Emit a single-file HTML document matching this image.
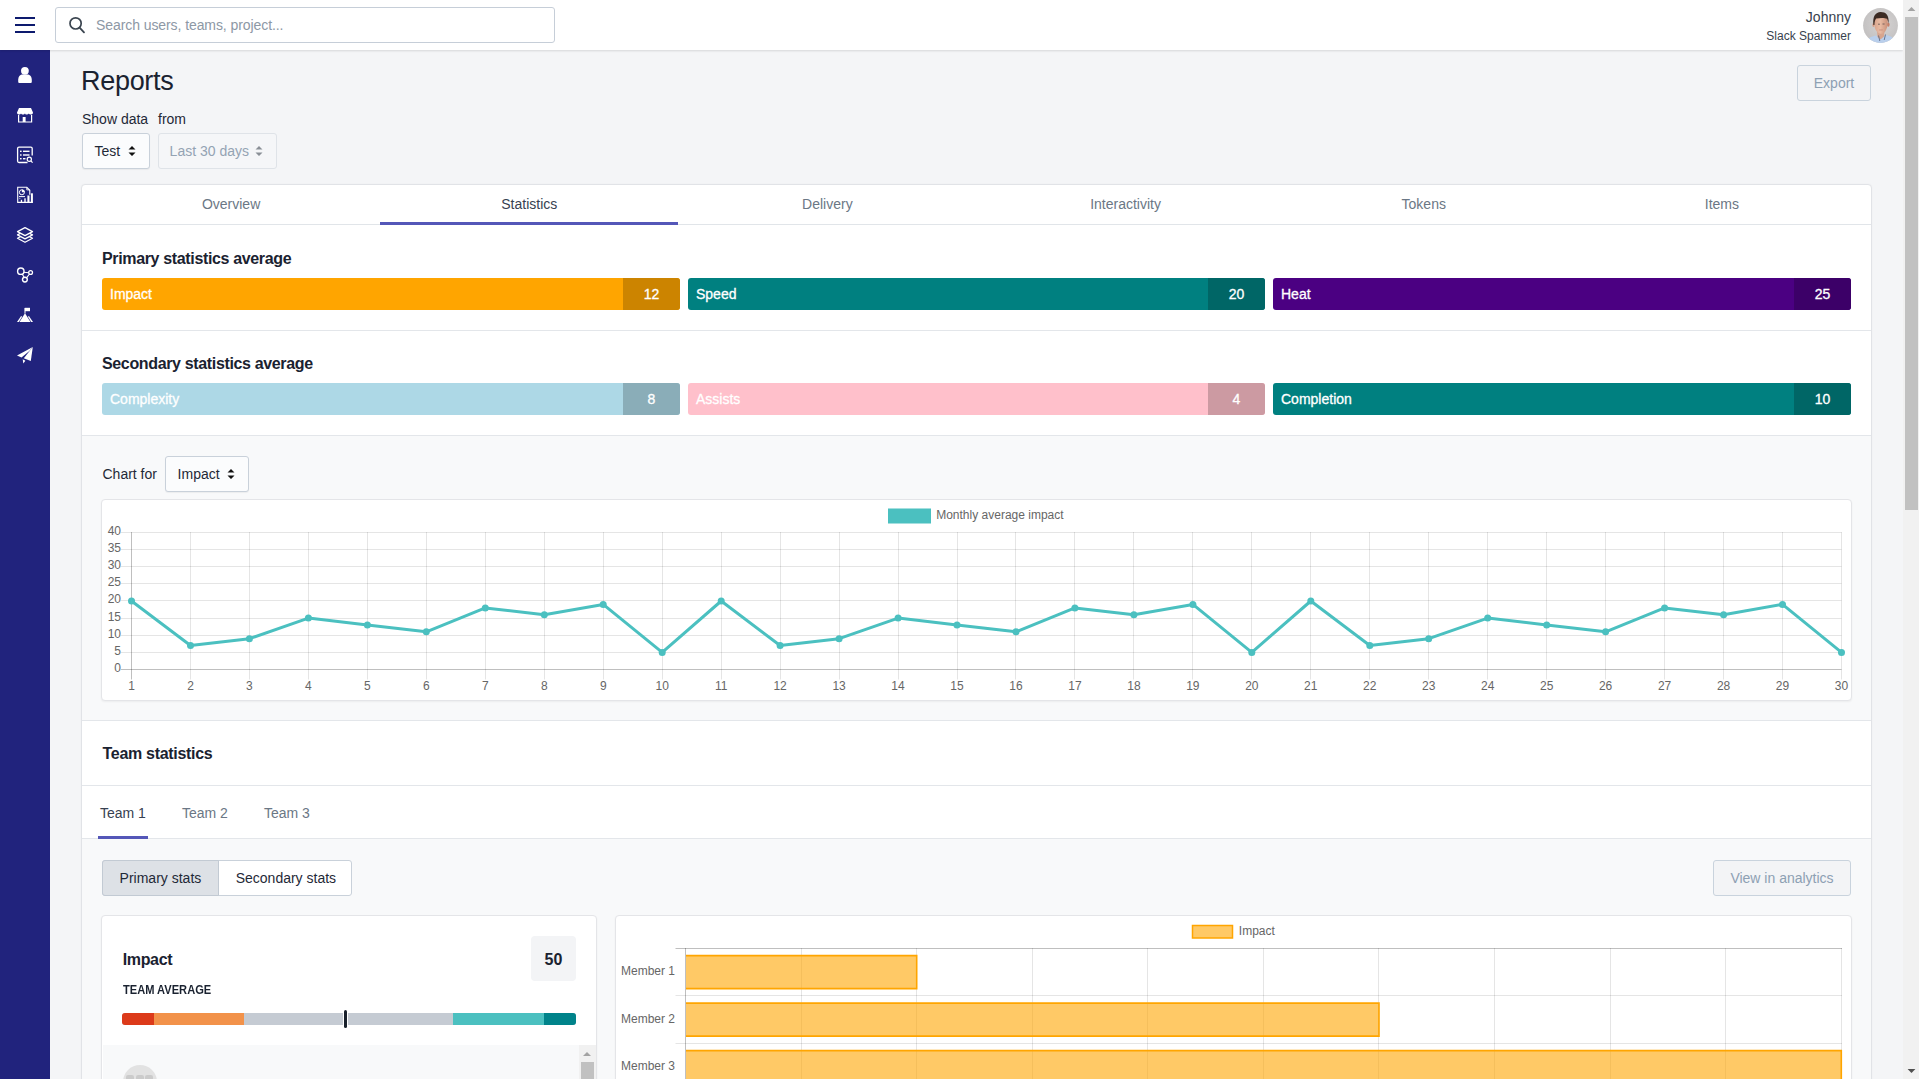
<!DOCTYPE html>
<html><head><meta charset="utf-8"><title>Reports</title>
<style>
html,body{margin:0;padding:0;}
body{width:1919px;height:1079px;overflow:hidden;position:relative;background:#f4f5f7;font-family:"Liberation Sans", sans-serif;}
.t{position:absolute;white-space:nowrap;line-height:1;}
.b{position:absolute;box-sizing:border-box;}
svg{position:absolute;overflow:visible;}
</style></head><body>
<div class="t" style="left:81px;top:68.48px;font-size:27px;color:#1a2230;font-weight:400;letter-spacing:-0.3px;">Reports</div>
<div class="t" style="left:82px;top:112.07px;font-size:14px;color:#1f2937;font-weight:400;">Show data</div>
<div class="t" style="left:158px;top:112.07px;font-size:14px;color:#1f2937;font-weight:400;">from</div>
<div class="b" style="left:82px;top:133px;width:68px;height:36px;background:#fbfcfd;border:1px solid #c9d1da;border-radius:3px;box-shadow:0 1px 1px rgba(0,0,0,0.05);"></div>
<div class="t" style="left:94.5px;top:143.67px;font-size:14px;color:#1f2937;font-weight:400;">Test</div>
<div class="b" style="left:158px;top:133px;width:119px;height:36px;background:#f5f6f8;border:1px solid #dfe3e8;border-radius:3px;"></div>
<div class="t" style="left:169.6px;top:143.67px;font-size:14px;color:#94a3b3;font-weight:400;">Last 30 days</div>
<svg style="left:128px;top:145px" width="8" height="12" viewBox="0 0 8 12"><path d="M0.5 4.5 L4 1 L7.5 4.5 Z M0.5 7.5 L4 11 L7.5 7.5 Z" fill="#111"/></svg>
<svg style="left:255px;top:145px" width="8" height="12" viewBox="0 0 8 12"><path d="M0.5 4.5 L4 1 L7.5 4.5 Z M0.5 7.5 L4 11 L7.5 7.5 Z" fill="#8a8f96"/></svg>
<div class="b" style="left:1797px;top:65px;width:74px;height:36px;background:#f3f4f6;border:1px solid #c9d3dd;border-radius:3px;"></div>
<div class="t" style="left:1634px;width:400px;text-align:center;top:75.97px;font-size:14px;color:#8da0b3;font-weight:400;">Export</div>
<div class="b" style="left:81px;top:184px;width:1791px;height:916px;background:#fff;border:1px solid #e1e3e7;border-radius:4px;box-shadow:0 0 2px rgba(0,0,0,0.04);"></div>
<div class="t" style="left:31.083333333333343px;width:400px;text-align:center;top:197.37px;font-size:14px;color:#6b7785;font-weight:400;">Overview</div>
<div class="t" style="left:329.25px;width:400px;text-align:center;top:197.37px;font-size:14px;color:#374151;font-weight:400;">Statistics</div>
<div class="t" style="left:627.4166666666667px;width:400px;text-align:center;top:197.37px;font-size:14px;color:#6b7785;font-weight:400;">Delivery</div>
<div class="t" style="left:925.5833333333335px;width:400px;text-align:center;top:197.37px;font-size:14px;color:#6b7785;font-weight:400;">Interactivity</div>
<div class="t" style="left:1223.75px;width:400px;text-align:center;top:197.37px;font-size:14px;color:#6b7785;font-weight:400;">Tokens</div>
<div class="t" style="left:1521.9166666666667px;width:400px;text-align:center;top:197.37px;font-size:14px;color:#6b7785;font-weight:400;">Items</div>
<div class="b" style="left:82px;top:224px;width:1789px;height:1px;background:#e1e5e9;"></div>
<div class="b" style="left:380px;top:222px;width:298px;height:3px;background:#5457b8;"></div>
<div class="t" style="left:102px;top:250.91px;font-size:16px;color:#1a2230;font-weight:700;letter-spacing:-0.35px;">Primary statistics average</div>
<div class="b" style="left:82px;top:330px;width:1789px;height:1px;background:#e3e6ea;"></div>
<div class="t" style="left:102px;top:356.21px;font-size:16px;color:#1a2230;font-weight:700;letter-spacing:-0.35px;">Secondary statistics average</div>
<div class="b" style="left:82px;top:435px;width:1789px;height:1px;background:#e3e6ea;"></div>
<div class="b" style="left:102px;top:278px;width:578px;height:32px;background:#ffa500;border-radius:3px;overflow:hidden;"></div>
<div class="b" style="left:623px;top:278px;width:57px;height:32px;background:#cc8400;border-radius:0 3px 3px 0;"></div>
<div class="t" style="left:110px;top:287.37px;font-size:14px;color:#fff;font-weight:400;-webkit-text-stroke:0.3px #fff;">Impact</div>
<div class="t" style="left:451.5px;width:400px;text-align:center;top:287.37px;font-size:14px;color:#fff;font-weight:400;-webkit-text-stroke:0.3px #fff;">12</div>
<div class="b" style="left:688px;top:278px;width:577px;height:32px;background:#008080;border-radius:3px;overflow:hidden;"></div>
<div class="b" style="left:1208px;top:278px;width:57px;height:32px;background:#006666;border-radius:0 3px 3px 0;"></div>
<div class="t" style="left:696px;top:287.37px;font-size:14px;color:#fff;font-weight:400;-webkit-text-stroke:0.3px #fff;">Speed</div>
<div class="t" style="left:1036.5px;width:400px;text-align:center;top:287.37px;font-size:14px;color:#fff;font-weight:400;-webkit-text-stroke:0.3px #fff;">20</div>
<div class="b" style="left:1273px;top:278px;width:578px;height:32px;background:#4b0082;border-radius:3px;overflow:hidden;"></div>
<div class="b" style="left:1794px;top:278px;width:57px;height:32px;background:#3c0068;border-radius:0 3px 3px 0;"></div>
<div class="t" style="left:1281px;top:287.37px;font-size:14px;color:#fff;font-weight:400;-webkit-text-stroke:0.3px #fff;">Heat</div>
<div class="t" style="left:1622.5px;width:400px;text-align:center;top:287.37px;font-size:14px;color:#fff;font-weight:400;-webkit-text-stroke:0.3px #fff;">25</div>
<div class="b" style="left:102px;top:383px;width:578px;height:32px;background:#add8e6;border-radius:3px;overflow:hidden;"></div>
<div class="b" style="left:623px;top:383px;width:57px;height:32px;background:#8aadb8;border-radius:0 3px 3px 0;"></div>
<div class="t" style="left:110px;top:392.37px;font-size:14px;color:#fff;font-weight:400;-webkit-text-stroke:0.3px #fff;">Complexity</div>
<div class="t" style="left:451.5px;width:400px;text-align:center;top:392.37px;font-size:14px;color:#fff;font-weight:400;-webkit-text-stroke:0.3px #fff;">8</div>
<div class="b" style="left:688px;top:383px;width:577px;height:32px;background:#ffc0cb;border-radius:3px;overflow:hidden;"></div>
<div class="b" style="left:1208px;top:383px;width:57px;height:32px;background:#cc9aa2;border-radius:0 3px 3px 0;"></div>
<div class="t" style="left:696px;top:392.37px;font-size:14px;color:#fff;font-weight:400;-webkit-text-stroke:0.3px #fff;">Assists</div>
<div class="t" style="left:1036.5px;width:400px;text-align:center;top:392.37px;font-size:14px;color:#fff;font-weight:400;-webkit-text-stroke:0.3px #fff;">4</div>
<div class="b" style="left:1273px;top:383px;width:578px;height:32px;background:#008080;border-radius:3px;overflow:hidden;"></div>
<div class="b" style="left:1794px;top:383px;width:57px;height:32px;background:#006666;border-radius:0 3px 3px 0;"></div>
<div class="t" style="left:1281px;top:392.37px;font-size:14px;color:#fff;font-weight:400;-webkit-text-stroke:0.3px #fff;">Completion</div>
<div class="t" style="left:1622.5px;width:400px;text-align:center;top:392.37px;font-size:14px;color:#fff;font-weight:400;-webkit-text-stroke:0.3px #fff;">10</div>
<div class="b" style="left:82px;top:436px;width:1789px;height:284px;background:#f8f9fa;"></div>
<div class="b" style="left:82px;top:720px;width:1789px;height:1px;background:#e3e6ea;"></div>
<div class="t" style="left:102.5px;top:467.37px;font-size:14px;color:#1f2937;font-weight:400;">Chart for</div>
<div class="b" style="left:165px;top:456px;width:84px;height:36px;background:#fbfcfd;border:1px solid #c9d1da;border-radius:3px;box-shadow:0 1px 1px rgba(0,0,0,0.05);"></div>
<div class="t" style="left:177.6px;top:467.37px;font-size:14px;color:#1f2937;font-weight:400;">Impact</div>
<svg style="left:227px;top:468px" width="8" height="12" viewBox="0 0 8 12"><path d="M0.5 4.5 L4 1 L7.5 4.5 Z M0.5 7.5 L4 11 L7.5 7.5 Z" fill="#111"/></svg>
<div class="b" style="left:101px;top:499px;width:1751px;height:202px;background:#fff;border:1px solid #e4e5e8;border-radius:4px;box-shadow:0 1px 2px rgba(0,0,0,0.05);"></div>
<svg style="left:0;top:0" width="1919" height="1079" viewBox="0 0 1919 1079"><line x1="121" y1="669.5" x2="1841.5" y2="669.5" stroke="rgba(0,0,0,0.25)" stroke-width="1"/><line x1="121" y1="652.5" x2="1841.5" y2="652.5" stroke="rgba(0,0,0,0.1)" stroke-width="1"/><line x1="121" y1="635.5" x2="1841.5" y2="635.5" stroke="rgba(0,0,0,0.1)" stroke-width="1"/><line x1="121" y1="618.5" x2="1841.5" y2="618.5" stroke="rgba(0,0,0,0.1)" stroke-width="1"/><line x1="121" y1="600.5" x2="1841.5" y2="600.5" stroke="rgba(0,0,0,0.1)" stroke-width="1"/><line x1="121" y1="583.5" x2="1841.5" y2="583.5" stroke="rgba(0,0,0,0.1)" stroke-width="1"/><line x1="121" y1="566.5" x2="1841.5" y2="566.5" stroke="rgba(0,0,0,0.1)" stroke-width="1"/><line x1="121" y1="549.5" x2="1841.5" y2="549.5" stroke="rgba(0,0,0,0.1)" stroke-width="1"/><line x1="121" y1="532.5" x2="1841.5" y2="532.5" stroke="rgba(0,0,0,0.1)" stroke-width="1"/><line x1="131.5" y1="532" x2="131.5" y2="679.5" stroke="rgba(0,0,0,0.25)" stroke-width="1"/><line x1="190.5" y1="532" x2="190.5" y2="679.5" stroke="rgba(0,0,0,0.1)" stroke-width="1"/><line x1="249.5" y1="532" x2="249.5" y2="679.5" stroke="rgba(0,0,0,0.1)" stroke-width="1"/><line x1="308.5" y1="532" x2="308.5" y2="679.5" stroke="rgba(0,0,0,0.1)" stroke-width="1"/><line x1="367.5" y1="532" x2="367.5" y2="679.5" stroke="rgba(0,0,0,0.1)" stroke-width="1"/><line x1="426.5" y1="532" x2="426.5" y2="679.5" stroke="rgba(0,0,0,0.1)" stroke-width="1"/><line x1="485.5" y1="532" x2="485.5" y2="679.5" stroke="rgba(0,0,0,0.1)" stroke-width="1"/><line x1="544.5" y1="532" x2="544.5" y2="679.5" stroke="rgba(0,0,0,0.1)" stroke-width="1"/><line x1="603.5" y1="532" x2="603.5" y2="679.5" stroke="rgba(0,0,0,0.1)" stroke-width="1"/><line x1="662.5" y1="532" x2="662.5" y2="679.5" stroke="rgba(0,0,0,0.1)" stroke-width="1"/><line x1="721.5" y1="532" x2="721.5" y2="679.5" stroke="rgba(0,0,0,0.1)" stroke-width="1"/><line x1="780.5" y1="532" x2="780.5" y2="679.5" stroke="rgba(0,0,0,0.1)" stroke-width="1"/><line x1="839.5" y1="532" x2="839.5" y2="679.5" stroke="rgba(0,0,0,0.1)" stroke-width="1"/><line x1="898.5" y1="532" x2="898.5" y2="679.5" stroke="rgba(0,0,0,0.1)" stroke-width="1"/><line x1="957.5" y1="532" x2="957.5" y2="679.5" stroke="rgba(0,0,0,0.1)" stroke-width="1"/><line x1="1015.5" y1="532" x2="1015.5" y2="679.5" stroke="rgba(0,0,0,0.1)" stroke-width="1"/><line x1="1074.5" y1="532" x2="1074.5" y2="679.5" stroke="rgba(0,0,0,0.1)" stroke-width="1"/><line x1="1133.5" y1="532" x2="1133.5" y2="679.5" stroke="rgba(0,0,0,0.1)" stroke-width="1"/><line x1="1192.5" y1="532" x2="1192.5" y2="679.5" stroke="rgba(0,0,0,0.1)" stroke-width="1"/><line x1="1251.5" y1="532" x2="1251.5" y2="679.5" stroke="rgba(0,0,0,0.1)" stroke-width="1"/><line x1="1310.5" y1="532" x2="1310.5" y2="679.5" stroke="rgba(0,0,0,0.1)" stroke-width="1"/><line x1="1369.5" y1="532" x2="1369.5" y2="679.5" stroke="rgba(0,0,0,0.1)" stroke-width="1"/><line x1="1428.5" y1="532" x2="1428.5" y2="679.5" stroke="rgba(0,0,0,0.1)" stroke-width="1"/><line x1="1487.5" y1="532" x2="1487.5" y2="679.5" stroke="rgba(0,0,0,0.1)" stroke-width="1"/><line x1="1546.5" y1="532" x2="1546.5" y2="679.5" stroke="rgba(0,0,0,0.1)" stroke-width="1"/><line x1="1605.5" y1="532" x2="1605.5" y2="679.5" stroke="rgba(0,0,0,0.1)" stroke-width="1"/><line x1="1664.5" y1="532" x2="1664.5" y2="679.5" stroke="rgba(0,0,0,0.1)" stroke-width="1"/><line x1="1723.5" y1="532" x2="1723.5" y2="679.5" stroke="rgba(0,0,0,0.1)" stroke-width="1"/><line x1="1782.5" y1="532" x2="1782.5" y2="679.5" stroke="rgba(0,0,0,0.1)" stroke-width="1"/><line x1="1841.5" y1="532" x2="1841.5" y2="679.5" stroke="rgba(0,0,0,0.1)" stroke-width="1"/><polyline points="131.5,601.0 190.5,645.5 249.4,638.7 308.4,618.1 367.4,625.0 426.3,631.8 485.3,607.9 544.3,614.7 603.2,604.4 662.2,652.4 721.2,601.0 780.1,645.5 839.1,638.7 898.1,618.1 957.0,625.0 1016.0,631.8 1074.9,607.9 1133.9,614.7 1192.9,604.4 1251.8,652.4 1310.8,601.0 1369.8,645.5 1428.7,638.7 1487.7,618.1 1546.7,625.0 1605.6,631.8 1664.6,607.9 1723.6,614.7 1782.5,604.4 1841.5,652.4" fill="none" stroke="#4bc0c0" stroke-width="3" stroke-linejoin="round"/><circle cx="131.5" cy="601.0" r="3.5" fill="#4bc0c0"/><circle cx="190.5" cy="645.5" r="3.5" fill="#4bc0c0"/><circle cx="249.4" cy="638.7" r="3.5" fill="#4bc0c0"/><circle cx="308.4" cy="618.1" r="3.5" fill="#4bc0c0"/><circle cx="367.4" cy="625.0" r="3.5" fill="#4bc0c0"/><circle cx="426.3" cy="631.8" r="3.5" fill="#4bc0c0"/><circle cx="485.3" cy="607.9" r="3.5" fill="#4bc0c0"/><circle cx="544.3" cy="614.7" r="3.5" fill="#4bc0c0"/><circle cx="603.2" cy="604.4" r="3.5" fill="#4bc0c0"/><circle cx="662.2" cy="652.4" r="3.5" fill="#4bc0c0"/><circle cx="721.2" cy="601.0" r="3.5" fill="#4bc0c0"/><circle cx="780.1" cy="645.5" r="3.5" fill="#4bc0c0"/><circle cx="839.1" cy="638.7" r="3.5" fill="#4bc0c0"/><circle cx="898.1" cy="618.1" r="3.5" fill="#4bc0c0"/><circle cx="957.0" cy="625.0" r="3.5" fill="#4bc0c0"/><circle cx="1016.0" cy="631.8" r="3.5" fill="#4bc0c0"/><circle cx="1074.9" cy="607.9" r="3.5" fill="#4bc0c0"/><circle cx="1133.9" cy="614.7" r="3.5" fill="#4bc0c0"/><circle cx="1192.9" cy="604.4" r="3.5" fill="#4bc0c0"/><circle cx="1251.8" cy="652.4" r="3.5" fill="#4bc0c0"/><circle cx="1310.8" cy="601.0" r="3.5" fill="#4bc0c0"/><circle cx="1369.8" cy="645.5" r="3.5" fill="#4bc0c0"/><circle cx="1428.7" cy="638.7" r="3.5" fill="#4bc0c0"/><circle cx="1487.7" cy="618.1" r="3.5" fill="#4bc0c0"/><circle cx="1546.7" cy="625.0" r="3.5" fill="#4bc0c0"/><circle cx="1605.6" cy="631.8" r="3.5" fill="#4bc0c0"/><circle cx="1664.6" cy="607.9" r="3.5" fill="#4bc0c0"/><circle cx="1723.6" cy="614.7" r="3.5" fill="#4bc0c0"/><circle cx="1782.5" cy="604.4" r="3.5" fill="#4bc0c0"/><circle cx="1841.5" cy="652.4" r="3.5" fill="#4bc0c0"/><rect x="888" y="508.5" width="43" height="15" fill="#4bc0c0"/></svg>
<div class="t" style="left:936.2px;top:509.23px;font-size:12px;color:#666;font-weight:400;">Monthly average impact</div>
<div class="t" style="right:1798px;top:662.43px;font-size:12px;color:#666;font-weight:400;text-align:right;">0</div>
<div class="t" style="right:1798px;top:645.43px;font-size:12px;color:#666;font-weight:400;text-align:right;">5</div>
<div class="t" style="right:1798px;top:628.43px;font-size:12px;color:#666;font-weight:400;text-align:right;">10</div>
<div class="t" style="right:1798px;top:611.43px;font-size:12px;color:#666;font-weight:400;text-align:right;">15</div>
<div class="t" style="right:1798px;top:593.43px;font-size:12px;color:#666;font-weight:400;text-align:right;">20</div>
<div class="t" style="right:1798px;top:576.43px;font-size:12px;color:#666;font-weight:400;text-align:right;">25</div>
<div class="t" style="right:1798px;top:559.43px;font-size:12px;color:#666;font-weight:400;text-align:right;">30</div>
<div class="t" style="right:1798px;top:542.43px;font-size:12px;color:#666;font-weight:400;text-align:right;">35</div>
<div class="t" style="right:1798px;top:525.43px;font-size:12px;color:#666;font-weight:400;text-align:right;">40</div>
<div class="t" style="left:-68.5px;width:400px;text-align:center;top:679.83px;font-size:12px;color:#666;font-weight:400;">1</div>
<div class="t" style="left:-9.534482758620697px;width:400px;text-align:center;top:679.83px;font-size:12px;color:#666;font-weight:400;">2</div>
<div class="t" style="left:49.431034482758605px;width:400px;text-align:center;top:679.83px;font-size:12px;color:#666;font-weight:400;">3</div>
<div class="t" style="left:108.39655172413791px;width:400px;text-align:center;top:679.83px;font-size:12px;color:#666;font-weight:400;">4</div>
<div class="t" style="left:167.3620689655172px;width:400px;text-align:center;top:679.83px;font-size:12px;color:#666;font-weight:400;">5</div>
<div class="t" style="left:226.32758620689657px;width:400px;text-align:center;top:679.83px;font-size:12px;color:#666;font-weight:400;">6</div>
<div class="t" style="left:285.2931034482759px;width:400px;text-align:center;top:679.83px;font-size:12px;color:#666;font-weight:400;">7</div>
<div class="t" style="left:344.2586206896551px;width:400px;text-align:center;top:679.83px;font-size:12px;color:#666;font-weight:400;">8</div>
<div class="t" style="left:403.2241379310344px;width:400px;text-align:center;top:679.83px;font-size:12px;color:#666;font-weight:400;">9</div>
<div class="t" style="left:462.18965517241384px;width:400px;text-align:center;top:679.83px;font-size:12px;color:#666;font-weight:400;">10</div>
<div class="t" style="left:521.1551724137931px;width:400px;text-align:center;top:679.83px;font-size:12px;color:#666;font-weight:400;">11</div>
<div class="t" style="left:580.1206896551724px;width:400px;text-align:center;top:679.83px;font-size:12px;color:#666;font-weight:400;">12</div>
<div class="t" style="left:639.0862068965517px;width:400px;text-align:center;top:679.83px;font-size:12px;color:#666;font-weight:400;">13</div>
<div class="t" style="left:698.051724137931px;width:400px;text-align:center;top:679.83px;font-size:12px;color:#666;font-weight:400;">14</div>
<div class="t" style="left:757.0172413793103px;width:400px;text-align:center;top:679.83px;font-size:12px;color:#666;font-weight:400;">15</div>
<div class="t" style="left:815.9827586206897px;width:400px;text-align:center;top:679.83px;font-size:12px;color:#666;font-weight:400;">16</div>
<div class="t" style="left:874.9482758620688px;width:400px;text-align:center;top:679.83px;font-size:12px;color:#666;font-weight:400;">17</div>
<div class="t" style="left:933.9137931034484px;width:400px;text-align:center;top:679.83px;font-size:12px;color:#666;font-weight:400;">18</div>
<div class="t" style="left:992.8793103448277px;width:400px;text-align:center;top:679.83px;font-size:12px;color:#666;font-weight:400;">19</div>
<div class="t" style="left:1051.844827586207px;width:400px;text-align:center;top:679.83px;font-size:12px;color:#666;font-weight:400;">20</div>
<div class="t" style="left:1110.8103448275863px;width:400px;text-align:center;top:679.83px;font-size:12px;color:#666;font-weight:400;">21</div>
<div class="t" style="left:1169.7758620689656px;width:400px;text-align:center;top:679.83px;font-size:12px;color:#666;font-weight:400;">22</div>
<div class="t" style="left:1228.7413793103449px;width:400px;text-align:center;top:679.83px;font-size:12px;color:#666;font-weight:400;">23</div>
<div class="t" style="left:1287.7068965517242px;width:400px;text-align:center;top:679.83px;font-size:12px;color:#666;font-weight:400;">24</div>
<div class="t" style="left:1346.6724137931035px;width:400px;text-align:center;top:679.83px;font-size:12px;color:#666;font-weight:400;">25</div>
<div class="t" style="left:1405.6379310344828px;width:400px;text-align:center;top:679.83px;font-size:12px;color:#666;font-weight:400;">26</div>
<div class="t" style="left:1464.603448275862px;width:400px;text-align:center;top:679.83px;font-size:12px;color:#666;font-weight:400;">27</div>
<div class="t" style="left:1523.5689655172414px;width:400px;text-align:center;top:679.83px;font-size:12px;color:#666;font-weight:400;">28</div>
<div class="t" style="left:1582.5344827586207px;width:400px;text-align:center;top:679.83px;font-size:12px;color:#666;font-weight:400;">29</div>
<div class="t" style="left:1641.5px;width:400px;text-align:center;top:679.83px;font-size:12px;color:#666;font-weight:400;">30</div>
<div class="t" style="left:102.5px;top:745.91px;font-size:16px;color:#1a2230;font-weight:700;letter-spacing:-0.3px;">Team statistics</div>
<div class="b" style="left:82px;top:785px;width:1789px;height:1px;background:#e3e6ea;"></div>
<div class="t" style="left:100px;top:806.17px;font-size:14px;color:#374151;font-weight:400;">Team 1</div>
<div class="t" style="left:182px;top:806.17px;font-size:14px;color:#6b7785;font-weight:400;">Team 2</div>
<div class="t" style="left:264px;top:806.17px;font-size:14px;color:#6b7785;font-weight:400;">Team 3</div>
<div class="b" style="left:82px;top:838px;width:1789px;height:262px;background:#f8f9fa;border-top:1px solid #e3e6ea;"></div>
<div class="b" style="left:98px;top:836px;width:50px;height:3px;background:#5457b8;"></div>
<div class="b" style="left:102px;top:860px;width:250px;height:36px;background:#fff;border:1px solid #c9d1da;border-radius:3px;"></div>
<div class="b" style="left:102px;top:860px;width:117px;height:36px;background:#dde1e6;border:1px solid #c2cad3;border-radius:3px 0 0 3px;"></div>
<div class="t" style="left:119.6px;top:871.17px;font-size:14px;color:#1f2937;font-weight:400;">Primary stats</div>
<div class="t" style="left:235.7px;top:871.17px;font-size:14px;color:#1f2937;font-weight:400;">Secondary stats</div>
<div class="b" style="left:1713px;top:860px;width:138px;height:36px;background:#f3f4f6;border:1px solid #c9d3dd;border-radius:3px;"></div>
<div class="t" style="left:1582px;width:400px;text-align:center;top:870.77px;font-size:14px;color:#8da0b3;font-weight:400;">View in analytics</div>
<div class="b" style="left:101px;top:915px;width:496px;height:185px;background:#fff;border:1px solid #e4e5e8;border-radius:4px;box-shadow:0 1px 2px rgba(0,0,0,0.05);"></div>
<div class="t" style="left:122.7px;top:951.71px;font-size:16px;color:#1a2230;font-weight:700;letter-spacing:-0.35px;">Impact</div>
<div class="b" style="left:531px;top:936px;width:45px;height:45px;background:#f3f4f6;border-radius:4px;"></div>
<div class="t" style="left:353.5px;width:400px;text-align:center;top:952.21px;font-size:16px;color:#1a2230;font-weight:700;">50</div>
<div class="t" style="left:122.7px;top:983.53px;font-size:12px;color:#1a2230;font-weight:700;transform:scaleX(0.925);transform-origin:0 0;">TEAM AVERAGE</div>
<div class="b" style="left:122px;top:1013px;width:454px;height:12px;background:#c5cbd3;border-radius:3px;overflow:hidden;"></div>
<div class="b" style="left:122px;top:1013px;width:32px;height:12px;background:#dc3a1a;border-radius:3px 0 0 3px;"></div>
<div class="b" style="left:154px;top:1013px;width:90px;height:12px;background:#f2924a;"></div>
<div class="b" style="left:453px;top:1013px;width:91px;height:12px;background:#4bc0c0;"></div>
<div class="b" style="left:544px;top:1013px;width:32px;height:12px;background:#00838a;border-radius:0 3px 3px 0;"></div>
<div class="b" style="left:343px;top:1009px;width:5px;height:20px;background:#fff;border-radius:2px;"></div>
<div class="b" style="left:344px;top:1010px;width:3px;height:18px;background:#19212c;border-radius:1.5px;"></div>
<div class="b" style="left:103px;top:1045px;width:493px;height:55px;background:#f8f9fa;"></div>
<div class="b" style="left:579px;top:1045px;width:17px;height:55px;background:#f1f1f1;"></div>
<svg style="left:582px;top:1050px" width="10" height="8" viewBox="0 0 10 8"><path d="M1 6 L5 2 L9 6 Z" fill="#a3a3a3"/></svg>
<div class="b" style="left:581px;top:1062px;width:13px;height:38px;background:#c1c1c1;"></div>
<div class="b" style="left:123px;top:1065px;width:34px;height:34px;background:#e2e2e2;border-radius:50%;"></div>
<div class="b" style="left:126px;top:1075px;width:8px;height:8px;background:#cbcbcb;border-radius:2px;"></div>
<div class="b" style="left:136px;top:1075px;width:8px;height:8px;background:#cbcbcb;border-radius:2px;"></div>
<div class="b" style="left:145px;top:1075px;width:8px;height:8px;background:#cbcbcb;border-radius:2px;"></div>
<div class="b" style="left:615px;top:915px;width:1237px;height:185px;background:#fff;border:1px solid #e4e5e8;border-radius:4px;box-shadow:0 1px 2px rgba(0,0,0,0.05);"></div>
<svg style="left:0;top:0" width="1919" height="1079" viewBox="0 0 1919 1079"><line x1="675.5" y1="948.5" x2="1842" y2="948.5" stroke="rgba(0,0,0,0.25)" stroke-width="1"/><line x1="675.5" y1="995.5" x2="1842" y2="995.5" stroke="rgba(0,0,0,0.1)" stroke-width="1"/><line x1="675.5" y1="1043.5" x2="1842" y2="1043.5" stroke="rgba(0,0,0,0.1)" stroke-width="1"/><line x1="675.5" y1="1090.5" x2="1842" y2="1090.5" stroke="rgba(0,0,0,0.1)" stroke-width="1"/><line x1="685.5" y1="948" x2="685.5" y2="1100" stroke="rgba(0,0,0,0.25)" stroke-width="1"/><line x1="801.5" y1="948" x2="801.5" y2="1100" stroke="rgba(0,0,0,0.1)" stroke-width="1"/><line x1="916.5" y1="948" x2="916.5" y2="1100" stroke="rgba(0,0,0,0.1)" stroke-width="1"/><line x1="1032.5" y1="948" x2="1032.5" y2="1100" stroke="rgba(0,0,0,0.1)" stroke-width="1"/><line x1="1147.5" y1="948" x2="1147.5" y2="1100" stroke="rgba(0,0,0,0.1)" stroke-width="1"/><line x1="1263.5" y1="948" x2="1263.5" y2="1100" stroke="rgba(0,0,0,0.1)" stroke-width="1"/><line x1="1378.5" y1="948" x2="1378.5" y2="1100" stroke="rgba(0,0,0,0.1)" stroke-width="1"/><line x1="1494.5" y1="948" x2="1494.5" y2="1100" stroke="rgba(0,0,0,0.1)" stroke-width="1"/><line x1="1610.5" y1="948" x2="1610.5" y2="1100" stroke="rgba(0,0,0,0.1)" stroke-width="1"/><line x1="1725.5" y1="948" x2="1725.5" y2="1100" stroke="rgba(0,0,0,0.1)" stroke-width="1"/><line x1="1841.5" y1="948" x2="1841.5" y2="1100" stroke="rgba(0,0,0,0.1)" stroke-width="1"/><rect x="686" y="955.6" width="230.7" height="33" fill="rgba(255,165,0,0.6)"/><path d="M686 955.6 L916.7 955.6 L916.7 988.6 L686 988.6" fill="none" stroke="#ffa500" stroke-width="1.6"/><rect x="686" y="1003.1" width="693.0" height="33" fill="rgba(255,165,0,0.6)"/><path d="M686 1003.1 L1379.0 1003.1 L1379.0 1036.1 L686 1036.1" fill="none" stroke="#ffa500" stroke-width="1.6"/><rect x="686" y="1050.6" width="1155.3" height="33" fill="rgba(255,165,0,0.6)"/><path d="M686 1050.6 L1841.3 1050.6 L1841.3 1083.6 L686 1083.6" fill="none" stroke="#ffa500" stroke-width="1.6"/><rect x="1192.5" y="925.5" width="40" height="12.5" fill="rgba(255,165,0,0.6)" stroke="#ffa500" stroke-width="1.5"/></svg>
<div class="t" style="left:1238.8px;top:924.83px;font-size:12px;color:#666;font-weight:400;">Impact</div>
<div class="t" style="right:1244px;top:965.03px;font-size:12px;color:#666;font-weight:400;text-align:right;">Member 1</div>
<div class="t" style="right:1244px;top:1012.53px;font-size:12px;color:#666;font-weight:400;text-align:right;">Member 2</div>
<div class="t" style="right:1244px;top:1060.03px;font-size:12px;color:#666;font-weight:400;text-align:right;">Member 3</div>
<div class="b" style="left:0px;top:0px;width:1903px;height:50px;background:#fff;box-shadow:0 1px 2px rgba(0,0,0,0.12);z-index:5;"></div>
<div style="position:absolute;left:0;top:0;width:1904px;height:50px;z-index:6;">
<div class="b" style="left:15px;top:17px;width:20px;height:2px;background:#0d1a6e;"></div>
<div class="b" style="left:15px;top:24px;width:20px;height:2px;background:#0d1a6e;"></div>
<div class="b" style="left:15px;top:31px;width:20px;height:2px;background:#0d1a6e;"></div>
<div class="b" style="left:55px;top:7px;width:500px;height:36px;border:1px solid #c6ced8;border-radius:3px;background:#fff;"></div>
<svg style="left:67px;top:16px" width="20" height="20" viewBox="0 0 20 20"><circle cx="8.6" cy="7.4" r="5.6" fill="none" stroke="#3b4550" stroke-width="1.7"/><line x1="12.6" y1="11.6" x2="17" y2="16.4" stroke="#3b4550" stroke-width="1.8" stroke-linecap="round"/></svg>
<div class="t" style="left:96px;top:18.37px;font-size:14px;color:#8d98a5;font-weight:400;letter-spacing:-0.08px;">Search users, teams, project...</div>
<div class="t" style="right:53px;top:10.07px;font-size:14px;color:#38424e;font-weight:400;text-align:right;">Johnny</div>
<div class="t" style="right:53px;top:29.73px;font-size:12px;color:#38424e;font-weight:400;text-align:right;">Slack Spammer</div>
<svg style="left:1863px;top:8px" width="35" height="35" viewBox="0 0 35 35">
<defs><clipPath id="av"><circle cx="17.5" cy="17.5" r="17.4"/></clipPath>
<radialGradient id="avbg" cx="0.55" cy="0.45" r="0.6"><stop offset="0" stop-color="#d6d4d4"/><stop offset="1" stop-color="#c2c0c0"/></radialGradient>
<linearGradient id="skin" x1="0" y1="0" x2="1" y2="0"><stop offset="0" stop-color="#d9a48c"/><stop offset="0.45" stop-color="#e8bba3"/><stop offset="1" stop-color="#c98f78"/></linearGradient>
<filter id="bl" x="-20%" y="-20%" width="140%" height="140%"><feGaussianBlur stdDeviation="0.45"/></filter></defs>
<g clip-path="url(#av)">
<rect width="35" height="35" fill="url(#avbg)"/>
<g filter="url(#bl)">
<path d="M3 36 C4 30 8 28.5 13 27.5 L17.5 30 L22.5 27 C27 27.5 31 29 33 36 Z" fill="#b9cfec"/>
<path d="M14 23 L14.5 29 L17.5 31.5 L21 28.5 L21.5 22.5 Z" fill="#d7a58e"/>
<path d="M15.5 27.5 L16.8 33 M22.5 26.5 L21.2 32" stroke="#55607a" stroke-width="0.8" fill="none"/>
<ellipse cx="25.3" cy="16.6" rx="1.3" ry="2.2" fill="#c47f68"/>
<ellipse cx="10.4" cy="17" rx="1" ry="1.9" fill="#d59c85"/>
<path d="M11 9.5 C10.6 20 13 25.5 18 25.8 C22.5 25.5 25 21 24.8 9.5 Z" fill="url(#skin)"/>
<path d="M15 16.2 L16.9 16.2 M19.5 16 L21.6 16" stroke="#6d5a55" stroke-width="0.9"/>
<path d="M16.2 22 L19.8 21.9" stroke="#c7877a" stroke-width="0.8"/>
<path d="M10.4 17 C9.5 8 12.5 4.2 17.5 3.9 C22.5 3.8 26.3 6.5 25.6 15.5 C25 13 24.6 11.5 24 10.8 C21.5 9.8 17 10 13.2 10.6 C12.2 11.5 11.6 13.5 11.4 17 Z" fill="#3a2b24"/>
</g></g></svg>
</div>
<div class="b" style="left:0px;top:50px;width:50px;height:1029px;background:#21237d;z-index:4;"></div>
<svg style="left:0;top:50px;z-index:7" width="50" height="330" viewBox="0 50 50 330"><circle cx="24.9" cy="70.8" r="3.9" fill="#fff"/><path d="M18.2 80 C18.2 76 20.5 74.5 22.5 74.4 L27.3 74.4 C29.5 74.5 31.8 76 31.8 80 L31.8 81.5 C31.8 82.5 31.3 83 30.3 83 L19.7 83 C18.7 83 18.2 82.5 18.2 81.5 Z" fill="#fff"/><path d="M19 108 L31 108 L33 112.5 C33 114 32 114.6 31 114.6 C30 114.6 29.2 114 28.8 113.4 C28.3 114 27.5 114.6 26.5 114.6 C25.5 114.6 25.2 114 25 113.6 C24.6 114 24 114.6 23 114.6 C22 114.6 21.4 114 21 113.4 C20.6 114 20 114.6 19 114.6 C18 114.6 17 114 17 112.5 Z" fill="#fff"/><path d="M18.6 115 L18.6 122 L31.6 122 L31.6 115" fill="none" stroke="#fff" stroke-width="1.2"/><rect x="22.7" y="117" width="2.9" height="5" fill="#fff"/><path d="M27.5 162.5 L19 162.5 Q17.6 162.5 17.6 161 L17.6 148.6 Q17.6 147.2 19 147.2 L30.8 147.2 Q32.2 147.2 32.2 148.6 L32.2 155.5" fill="none" stroke="#fff" stroke-width="1.3"/><rect x="20" y="150.6" width="1.6" height="1.4" fill="#fff"/><rect x="23" y="150.6" width="6.5" height="1.4" fill="#fff"/><rect x="20" y="154.3" width="1.6" height="1.4" fill="#fff"/><rect x="23" y="154.3" width="6.5" height="1.4" fill="#fff"/><rect x="20" y="158" width="1.6" height="1.4" fill="#fff"/><rect x="23" y="158" width="2.5" height="1.4" fill="#fff"/><circle cx="29.3" cy="159.3" r="2.1" fill="none" stroke="#fff" stroke-width="1.2"/><line x1="30.8" y1="160.8" x2="32.6" y2="162.6" stroke="#fff" stroke-width="1.2"/><path d="M29.8 194.8 L29.8 190.3 L26.8 187.3 L17.7 187.3 L17.7 202.4 L32.9 202.4" fill="none" stroke="#fff" stroke-width="1.1"/><path d="M26.8 187.5 L26.8 189.9 L29.5 189.9" fill="none" stroke="#fff" stroke-width="0.9"/><circle cx="21.9" cy="192.3" r="2.5" fill="none" stroke="#fff" stroke-width="1"/><path d="M21.9 192.3 L21.9 189.5 A2.8 2.8 0 0 1 24.7 192.3 Z" fill="#fff"/><rect x="19" y="196.1" width="6" height="1" fill="#fff"/><rect x="19.2" y="198" width="1.2" height="1.1" fill="#fff" opacity="0.6"/><rect x="20.8" y="199.8" width="1.3" height="2.6" fill="#fff"/><rect x="24.3" y="198.3" width="1.4" height="4.1" fill="#fff"/><rect x="27.4" y="195.5" width="2.1" height="6.9" fill="#fff"/><rect x="30.9" y="193.3" width="2" height="9.1" fill="#fff"/><path d="M25 234.3 L32.5 238.3 L25 242.3 L17.5 238.3 Z" fill="#21237d" stroke="#fff" stroke-width="1.3" stroke-linejoin="round"/><path d="M25 230.9 L32.5 234.9 L25 238.9 L17.5 234.9 Z" fill="#21237d" stroke="#fff" stroke-width="1.3" stroke-linejoin="round"/><path d="M25 227.6 L32.5 231.6 L25 235.6 L17.5 231.6 Z" fill="#21237d" stroke="#fff" stroke-width="1.3" stroke-linejoin="round"/><circle cx="20.8" cy="271.2" r="3.2" fill="none" stroke="#fff" stroke-width="1.4"/><circle cx="30.6" cy="272.5" r="1.9" fill="none" stroke="#fff" stroke-width="1.3"/><circle cx="24.9" cy="279.6" r="2.4" fill="none" stroke="#fff" stroke-width="1.4"/><line x1="23.8" y1="272.3" x2="28.7" y2="272.8" stroke="#fff" stroke-width="1.1"/><line x1="22.3" y1="274" x2="24" y2="277.3" stroke="#fff" stroke-width="1.1"/><line x1="29.5" y1="274" x2="26.5" y2="277.8" stroke="#fff" stroke-width="1.1"/><path d="M25 313.2 L30.5 322 L19.5 322 Z" fill="#fff"/><path d="M17 322 L18.8 322 L22.1 316.7 L21.1 316 Z" fill="#fff"/><path d="M33 322 L31.2 322 L27.9 316.7 L28.9 316 Z" fill="#fff"/><rect x="24.5" y="308" width="1" height="5.5" fill="#fff"/><path d="M24.8 307.8 L30 307.8 L30 311.2 L24.8 311.2 Z" fill="#fff"/><path d="M17 355.4 L32.8 347 L29.4 350.9 L21.5 357.6 Z" fill="#fff"/><path d="M32.8 347 L30.8 361 L23.8 358.2 Z" fill="#fff"/><path d="M22.7 359.3 L25.4 360.7 L23.3 363.4 Z" fill="#fff"/></svg>
<div class="b" style="left:1903px;top:0px;width:16px;height:1079px;background:#f1f1f1;z-index:8;"></div>
<svg style="left:1904px;top:0;z-index:9" width="15" height="1079" viewBox="0 0 15 1079"><path d="M3.6 11 L7.5 7 L11.4 11 Z" fill="#a3a3a3"/><rect x="1" y="17" width="13" height="493" fill="#c1c1c1"/><path d="M3.6 1069 L11.4 1069 L7.5 1073 Z" fill="#505050"/></svg>
</body></html>
